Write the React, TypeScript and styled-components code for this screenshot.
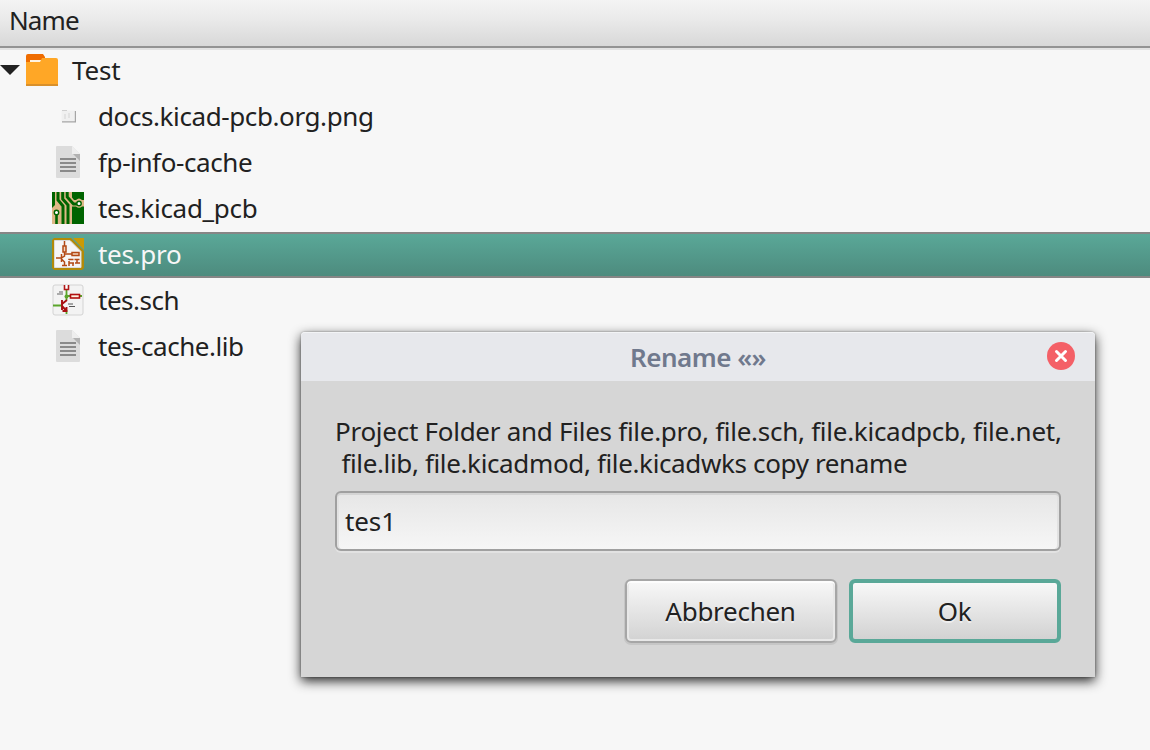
import React from "react";
import styled, { createGlobalStyle, css } from "styled-components";

const GlobalStyle = createGlobalStyle`
  * { box-sizing: border-box; }
  body {
    margin: 0;
    background: #f7f7f7;
    color: #212121;
    font-family: "Noto Sans", "Open Sans", sans-serif;
    font-size: 26px;
    overflow: hidden;
  }
`;

const Window = styled.main`
  position: relative;
  width: 1150px;
  height: 750px;
  background: #f7f7f7;
`;

const Label = styled.span<{ $track?: number }>`
  white-space: pre;
  line-height: 32px;
  letter-spacing: ${(p) => p.$track ?? 0}px;
`;

const Header = styled.header`
  display: flex;
  align-items: center;
  height: 48px;
  padding: 0 0 6px 9px;
  background: linear-gradient(#f4f4f4, #ececec 35%, #d8d8d8);
  border-bottom: 2px solid #939393;
  box-shadow: 0 2px 0 #e2e2e2;
`;

const Row = styled.div<{ $selected?: boolean; $root?: boolean }>`
  display: flex;
  align-items: center;
  height: 46px;
  padding: 0 0 2px ${(p) => (p.$root ? 0 : 52)}px;
  gap: 14px;
  ${(p) =>
    p.$selected &&
    css`
      color: #f7f7f7;
      background: linear-gradient(#5aa898, #4d8b7e);
      border: solid #868686;
      border-width: 2px 0;
    `}
`;

const Arrow = styled.svg`
  flex: none;
  width: 20px;
  height: 12px;
  margin-right: -8px;
`;

const Icon = styled.svg`
  flex: none;
  width: 32px;
  height: 32px;
  margin-top: -1px;
`;

const Dialog = styled.section`
  position: absolute;
  left: 301px;
  top: 332px;
  width: 794px;
  height: 345px;
  border-radius: 4px 4px 0 0;
  background: #d6d6d6;
  box-shadow: 0 0 2px rgba(0, 0, 0, 0.4), 0 4px 12px rgba(0, 0, 0, 0.85);
`;

const TitleBar = styled.div`
  display: grid;
  grid-template-columns: 1fr auto 1fr;
  align-items: center;
  height: 49px;
  padding: 0 20px;
  border-radius: 4px 4px 0 0;
  background: #e7e8ec;
  box-shadow: inset 0 1px 0 #f3f4f6;
  color: #70798d;
  font-weight: 600;
`;

const Close = styled.button`
  justify-self: end;
  display: block;
  width: 28px;
  height: 28px;
  margin-bottom: 2px;
  padding: 0;
  border: 0;
  background: none;
  svg { display: block; }
`;

const Body = styled.div`
  display: flex;
  flex-direction: column;
  padding: 34px;
`;

const Message = styled.div`
  display: flex;
  flex-direction: column;
  height: 76px;
`;

const Field = styled.div`
  display: flex;
  align-items: center;
  height: 60px;
  padding: 0 8px;
  border: 2px solid #a0a0a0;
  border-radius: 6px;
  background: linear-gradient(#e6e6e6, #f6f6f6);
  box-shadow: 0 2px 0 #e2e2e2, inset 0 2px 0 #d4d4d4, inset 2px 0 0 #e2e2e2, inset -2px 0 0 #e2e2e2;
`;

const Actions = styled.div`
  display: flex;
  justify-content: flex-end;
  gap: 12px;
  margin-top: 28px;
`;

const Button = styled.button<{ $primary?: boolean }>`
  display: flex;
  align-items: center;
  justify-content: center;
  width: 212px;
  height: 64px;
  padding: 0 1px 0 0;
  color: inherit;
  font: inherit;
  text-shadow: 0 2px 0 rgba(255, 255, 255, 0.5);
  border-radius: 6px;
  background: linear-gradient(#f8f8f8, #d2d2d2) padding-box;
  ${(p) =>
    p.$primary
      ? css`
          border: 4px solid #5aa898;
        `
      : css`
          border: 2px solid #a6a6a6;
          box-shadow: inset 0 2px 0 #fdfdfd, inset 0 0 0 2px #e8e8e8, 0 1px 0 1px #c6c6c6;
        `}
`;

const FolderIcon = () => (
  <Icon viewBox="0 0 32 32">
    <path d="M0 2Q0 0 2 0H17L19 3V12H0Z" fill="#ef6c00" />
    <path d="M4 6H15V9H4Z" fill="#fff3e0" />
    <path d="M0 8H14L16 4H30Q32 4 32 6V32H0Z" fill="#ffa726" />
    <path d="M0 30H32V32H0Z" fill="#d9902b" />
  </Icon>
);

const TextFileIcon = () => (
  <Icon viewBox="0 0 32 32">
    <path d="M5 0H20L28 8V31Q28 32 27 32H5Q4 32 4 31V1Q4 0 5 0Z" fill="#dcdcdc" />
    <path d="M20 0L28 8H20Z" fill="#eeeeee" />
    <path d="M21 8H28V15Z" fill="#b2b2b2" />
    <path d="M8 13H24M8 17H24M8 21H24M8 25H24" stroke="#8a8a8a" strokeWidth="2" />
  </Icon>
);

const ThumbnailIcon = () => (
  <Icon viewBox="0 0 32 32">
    <path d="M9.5 10.5H23V21.5H9.5Z" fill="#f0f0f0" />
    <path d="M10 10.5H15" stroke="#cfcfcf" />
    <path d="M12 14H14V19H12ZM16 13H18V18H16Z" fill="#e2e2e2" />
    <path d="M10 21.8H23.4V11" fill="none" stroke="#a5a5a5" strokeWidth="1.2" />
  </Icon>
);

const BoardIcon = () => (
  <Icon viewBox="0 0 32 32">
    <path d="M0 0H32V32H0Z" fill="#deb887" />
    <path d="M0 0H3V13L0 16Z" fill="#006400" />
    <g fill="none" stroke="#006400" strokeWidth="3">
      <path d="M6 0V8L11 14V32" />
      <path d="M10.7 0V7L16 13V32" />
      <path d="M15.2 0V5L21.5 12H25" />
    </g>
    <path d="M20 0H32V8H30Q27 5 24 8H22L20 5.5ZM20 14.5H24Q27 17 30 14.5H32V32H20Z" fill="#006400" />
    <path d="M4.5 21V32" stroke="#006400" strokeWidth="2.6" />
    <circle cx="4.500" cy="20.500" r="2.200" fill="#fff" stroke="#006400" strokeWidth="1.400" />
    <circle cx="27" cy="11.500" r="2.200" fill="#fff" stroke="#006400" strokeWidth="1.400" />
  </Icon>
);

const ProjectIcon = () => (
  <Icon viewBox="0 0 32 32">
    <path d="M2 0H19L32 13V30L30 32H2L0 30V2Z" fill="#b28a08" />
    <path d="M21 0H32V12Z" fill="#c99a06" />
    <path d="M2.500 2.500H18L29 13.500V29.500H2.500Z" fill="#f6f6f6" stroke="#dcdcdc" />
    <g fill="none" stroke="#b34a16" strokeWidth="1.500">
      <path d="M12.500 3V8M12.500 14V18L9.500 20M4 20H9M9.500 16V24M9.500 21L12.500 24V28M10 27.500H15M12.500 16H20" />
      <path d="M11 8H14V14H11Z" fill="#f2d6c0" />
      <path d="M20 14.500H27V17.500H20Z" fill="#f2d6c0" />
      <path d="M17 28V21.500H28M17 25H28M21 24.500V28M25 21.500V25" strokeDasharray="5 1" />
    </g>
  </Icon>
);

const SchematicIcon = () => (
  <Icon viewBox="0 0 32 32">
    <rect x="1" y="1" width="30" height="30" rx="2" fill="#f3f3f3" stroke="#d3d3d3" />
    <path d="M14.500 6V16M14.500 12H18M28 12H30M1 21.500H9M14.500 26V30" stroke="#5aa52a" strokeWidth="1.800" />
    <circle cx="14.500" cy="12.500" r="2" fill="#5aa52a" />
    <path d="M12.500 1V5.500H16.500V1" fill="#fff" stroke="#b01818" strokeWidth="1.600" />
    <rect x="18.500" y="10.500" width="9" height="3.500" fill="#fff0e0" stroke="#b01010" strokeWidth="1.600" />
    <path d="M10 16V26M10 20L15 16M10 22L14.500 27M14.500 23V27H10.500" fill="none" stroke="#a81010" strokeWidth="1.900" />
    <path d="M7 8H11M5 10H11" stroke="#ababab" strokeWidth="1.800" />
    <path d="M16 20H21M17 22.500H23" stroke="#555" strokeWidth="1" />
  </Icon>
);

const files = [
  { name: "docs.kicad-pcb.org.png", icon: ThumbnailIcon, track: -0.4 },
  { name: "fp-info-cache", icon: TextFileIcon, track: -0.4 },
  { name: "tes.kicad_pcb", icon: BoardIcon, track: -0.28 },
  { name: "tes.pro", icon: ProjectIcon, track: -0.3, selected: true },
  { name: "tes.sch", icon: SchematicIcon, track: -0.5 },
  { name: "tes-cache.lib", icon: TextFileIcon, track: -0.46 },
];

export default function App() {
  return (
    <Window>
      <GlobalStyle />
      <Header>
        <Label $track={-0.9}>Name</Label>
      </Header>
      <Row $root>
        <Arrow viewBox="0 0 20 12">
          <path d="M0 1H20L10 11Z" fill="#212121" />
        </Arrow>
        <FolderIcon />
        <Label $track={-0.2}>Test</Label>
      </Row>
      {files.map(({ name, icon: FileIcon, track, selected }) => (
        <Row key={name} $selected={selected}>
          <FileIcon />
          <Label $track={track}>{name}</Label>
        </Row>
      ))}
      <Dialog>
        <TitleBar>
          <span />
          <Label $track={-0.5}>Rename «»</Label>
          <Close aria-label="Close">
            <svg width="28" height="28" viewBox="0 0 28 28">
              <circle cx="14" cy="14" r="14" fill="#f46067" />
              <path d="M9.500 9.500L18.500 18.500M18.500 9.500L9.500 18.500" stroke="#fff" strokeWidth="3" strokeLinecap="round" />
            </svg>
          </Close>
        </TitleBar>
        <Body>
          <Message>
            <Label $track={-0.27}>Project Folder and Files file.pro, file.sch, file.kicadpcb, file.net,</Label>
            <Label $track={-0.36}> file.lib, file.kicadmod, file.kicadwks copy rename</Label>
          </Message>
          <Field>
            <Label $track={-0.1}>tes1</Label>
          </Field>
          <Actions>
            <Button>
              <Label $track={-0.27}>Abbrechen</Label>
            </Button>
            <Button $primary>
              <Label $track={-0.3}>Ok</Label>
            </Button>
          </Actions>
        </Body>
      </Dialog>
    </Window>
  );
}
